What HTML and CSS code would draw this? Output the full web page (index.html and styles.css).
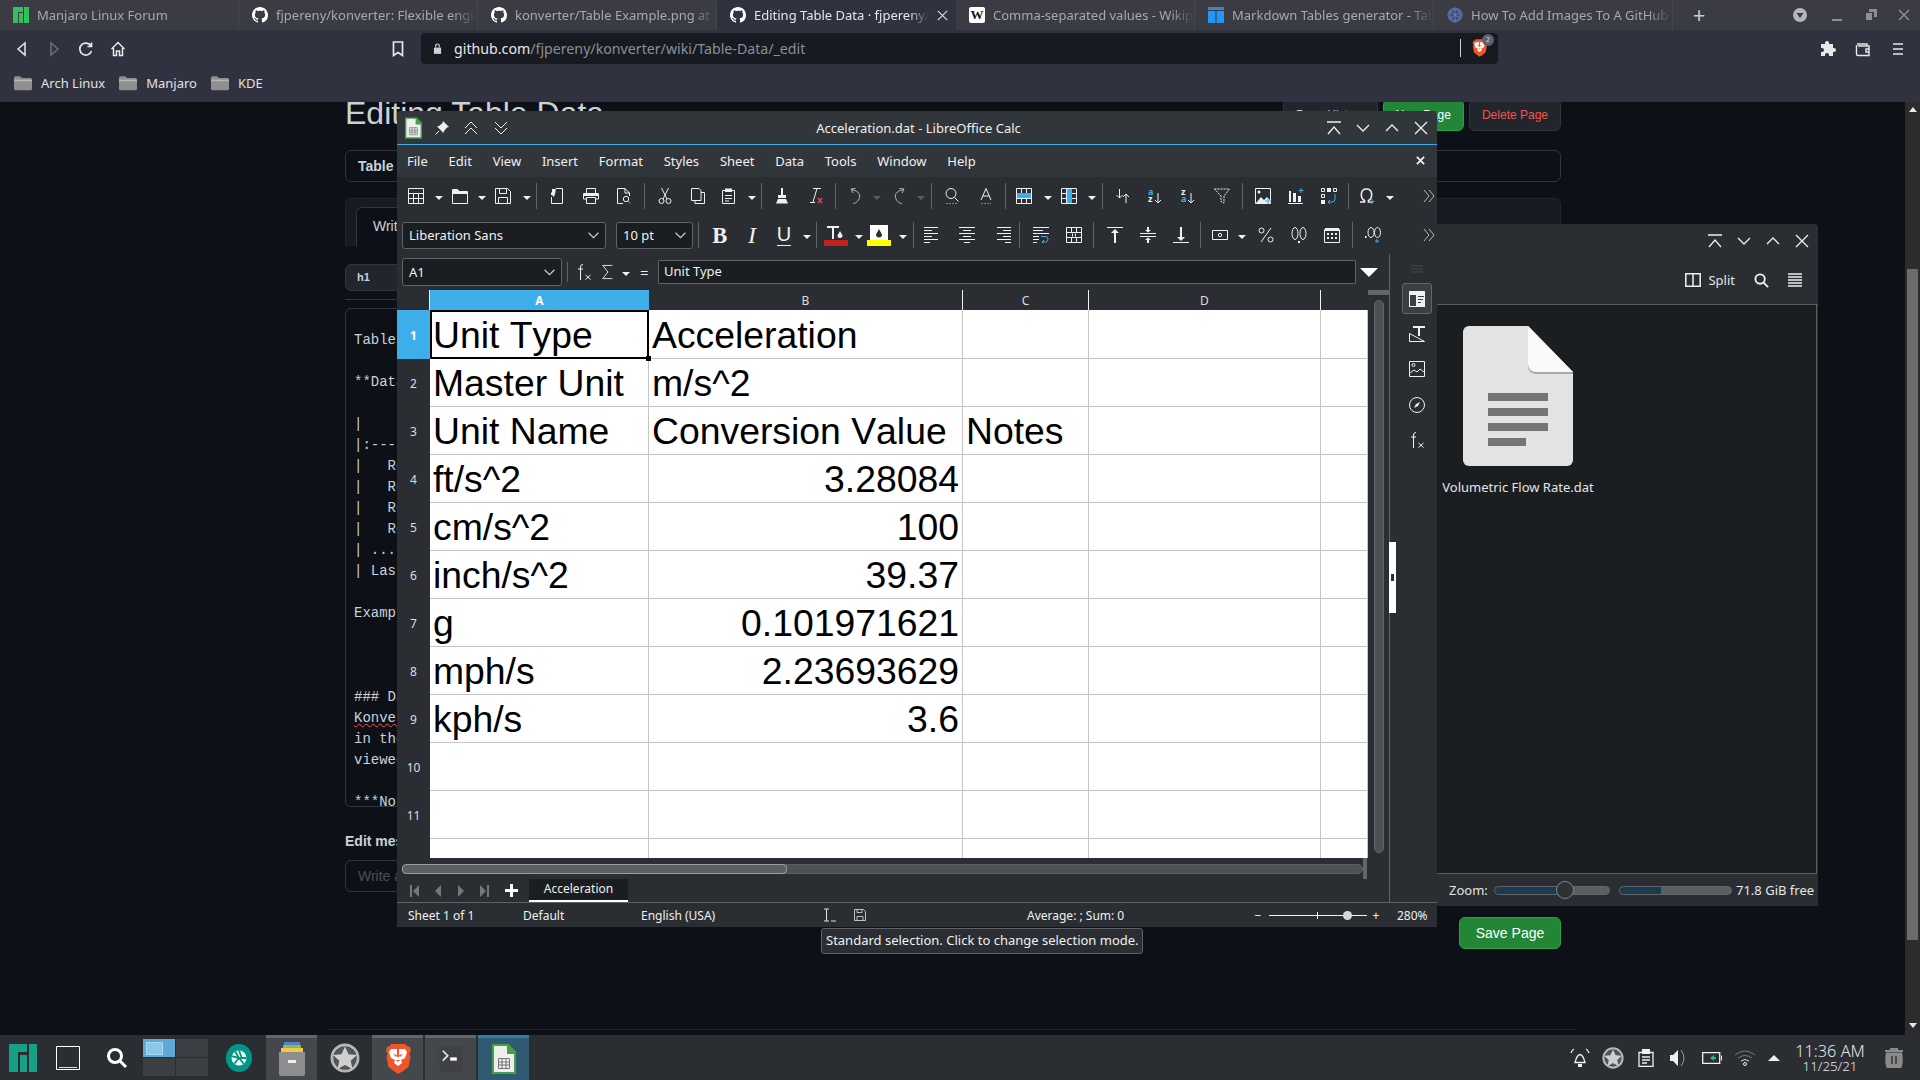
FILE: index.html
```html
<!DOCTYPE html>
<html lang="en">
<head>
<meta charset="utf-8">
<title>Editing Table Data</title>
<link rel="stylesheet" href="styles.css">
</head>
<body>
<svg class="defs" width="0" height="0">
<defs>
<symbol id="gh" viewBox="0 0 16 16"><path fill="currentColor" d="M8 0C3.58 0 0 3.58 0 8c0 3.54 2.29 6.53 5.47 7.59.4.07.55-.17.55-.38 0-.19-.01-.82-.01-1.49-2.01.37-2.53-.49-2.69-.94-.09-.23-.48-.94-.82-1.13-.28-.15-.68-.52-.01-.53.63-.01 1.08.58 1.23.82.72 1.21 1.87.87 2.33.66.07-.52.28-.87.51-1.07-1.78-.2-3.64-.89-3.64-3.95 0-.87.31-1.59.82-2.15-.08-.2-.36-1.02.08-2.12 0 0 .67-.21 2.2.82.64-.18 1.32-.27 2-.27s1.36.09 2 .27c1.53-1.04 2.2-.82 2.2-.82.44 1.1.16 1.92.08 2.12.51.56.82 1.27.82 2.15 0 3.07-1.87 3.75-3.65 3.95.29.25.54.73.54 1.48 0 1.07-.01 1.93-.01 2.2 0 .21.15.46.55.38A8.013 8.013 0 0016 8c0-4.42-3.58-8-8-8z"/></symbol>
<symbol id="folder" viewBox="0 0 16 16"><path fill="#8f8f8f" d="M0 3.5A1.5 1.5 0 011.5 2h4l1.5 1.5h7.5A1.5 1.5 0 0116 5v8a1.5 1.5 0 01-1.5 1.5h-13A1.5 1.5 0 010 13z"/><path fill="#b5b5b5" d="M0 5h16v1.5H0z"/></symbol>
<symbol id="table" viewBox="0 0 16 16"><path fill="none" stroke="currentColor" d="M.5.5h15v15H.5zM.5 5.500h15M.5 10.500h15M5.500 5.500v10M10.500 5.500v10"/></symbol>
<symbol id="open" viewBox="0 0 16 16"><path fill="none" stroke="currentColor" d="M.5 1.500h5l2 2h8v12H.5z"/><path fill="currentColor" d="M1 2h5l2 2h7v2H1z"/></symbol>
<symbol id="save" viewBox="0 0 16 16"><path fill="none" stroke="currentColor" d="M.5.5h12l3 3v12H.5zM4.500.5v5h7v-5M3.500 15.500v-6h9v6"/></symbol>
<symbol id="export" viewBox="0 0 16 16"><path fill="none" stroke="currentColor" d="M2.500 9v6.500h11V.5H7L2.500 5v2"/><path fill="currentColor" d="M3 1h3.500v3L5 9 3 7z"/></symbol>
<symbol id="print" viewBox="0 0 16 16"><path fill="none" stroke="currentColor" d="M3.500 5V.5h9V5M3.500 11H.5V5.500h15V11h-3M3.500 9.500h9v6h-9z"/><path fill="currentColor" d="M1 5h14v3H1z"/></symbol>
<symbol id="preview" viewBox="0 0 16 16"><path fill="none" stroke="currentColor" d="M7 15.500H1.500V.5H9l4.500 4.500v3M9 .5V5h4.500"/><circle cx="10" cy="11" r="2.700" fill="none" stroke="currentColor"/><path stroke="#3daee9" d="M12 13l2.500 2.500"/></symbol>
<symbol id="cut" viewBox="0 0 16 16"><path fill="none" stroke="currentColor" d="M4.500 0L10 11M11.500 0L6 11"/><circle cx="4.500" cy="13" r="2.500" fill="none" stroke="currentColor"/><circle cx="11.500" cy="13" r="2.500" fill="none" stroke="currentColor"/></symbol>
<symbol id="copy" viewBox="0 0 16 16"><path fill="none" stroke="currentColor" d="M1.500.5H9l2 2v10H1.500zM11 4.500h3.500v11H5v-3"/></symbol>
<symbol id="paste" viewBox="0 0 16 16"><path fill="none" stroke="currentColor" d="M4 2.500H1.500v13h12v-13H11M4 7.500h7M4 10.500h7M4 13h4"/><path fill="currentColor" d="M4 .5h7v3.500H4z"/></symbol>
<symbol id="brush" viewBox="0 0 16 16"><path fill="currentColor" d="M7 0h2v7H7zM4 7h8v3H4zM4 11h8l2 4.500H2z"/></symbol>
<symbol id="clear" viewBox="0 0 16 16"><path fill="none" stroke="currentColor" d="M6 .5h8M10 .5L6 14M3 14.500h5"/><path stroke="#da4453" stroke-width="1.500" d="M11 10l4 5M15 10l-4 5"/></symbol>
<symbol id="undo" viewBox="0 0 16 16"><path fill="none" stroke="#b8bbbe" d="M3 1l2 4M3 1l4.500-.500M3.500 1.500C11 3 13 7 11 11s-5 4.500-6 4.500"/></symbol>
<symbol id="redo" viewBox="0 0 16 16"><path fill="none" stroke="#b8bbbe" d="M13 1l-2 4M13 1l-4.500-.500M12.500 1.500C5 3 3 7 5 11s5 4.500 6 4.500"/></symbol>
<symbol id="find" viewBox="0 0 16 16"><circle cx="7" cy="5.500" r="5" fill="none" stroke="currentColor"/><path stroke="currentColor" d="M10.500 9.500l4 4"/><path stroke="#da6b44" stroke-dasharray="2 1" d="M2 15.500h11"/></symbol>
<symbol id="fontA" viewBox="0 0 16 16"><path fill="none" stroke="currentColor" d="M3 12L8 .5 13 12M5 8h6"/><path stroke="#27ae60" stroke-dasharray="2 1" d="M3 15.500h10"/></symbol>
<symbol id="tblblue" viewBox="0 0 16 16"><path fill="none" stroke="currentColor" d="M.5.5h15v15H.5zM5.500.5v15M10.500.5v15M.5 10.500h15"/><path fill="#3daee9" d="M1 5h14v5H1z"/></symbol>
<symbol id="colblue" viewBox="0 0 16 16"><path fill="none" stroke="currentColor" d="M.5.5h15v15H.5zM.5 5.500h15M.5 10.500h15M5.500.5v15"/><path fill="#3daee9" d="M6 1h5v14H6z"/></symbol>
<symbol id="sort" viewBox="0 0 16 16"><path fill="none" stroke="currentColor" d="M4.500 1v9M1.500 7l3 3 3-3M11 15V6M8 9l3-3 3 3"/></symbol>
<symbol id="az" viewBox="0 0 16 16"><text x="0" y="7" class="blue">a</text><text x="0" y="14" class="white">z</text><path fill="none" stroke="currentColor" d="M10 5v10M7 12l3 3 3-3"/></symbol>
<symbol id="za" viewBox="0 0 16 16"><text x="0" y="7" class="white">z</text><text x="0" y="14" class="blue">a</text><path fill="none" stroke="currentColor" d="M10 5v10M7 12l3 3 3-3"/></symbol>
<symbol id="filter" viewBox="0 0 16 16"><path fill="none" stroke="currentColor" stroke-dasharray="2 1" d="M.5 1h15L10 8v7l-3-1.500V8z"/></symbol>
<symbol id="image" viewBox="0 0 16 16"><path fill="none" stroke="currentColor" d="M.5.5h15v15H.5z"/><circle cx="4" cy="4" r="1.500" fill="currentColor"/><path fill="currentColor" d="M1 15l5-6 3 3 3-3 3 3v3z"/><path stroke="#3daee9" d="M13 10v6M10 13h6"/></symbol>
<symbol id="chart" viewBox="0 0 16 16"><path fill="currentColor" d="M1 3h2v11H1zM5 5h3v9H5zM10 8h3v6h-3zM0 15h15v1H0z"/><path stroke="#3daee9" d="M13 0v5M10.500 2.500h5"/></symbol>
<symbol id="pivot" viewBox="0 0 16 16"><path fill="none" stroke="currentColor" d="M.5.5h3v3h-3zM12.500.5h3v3h-3zM.5 6.500h3v3h-3z"/><path fill="currentColor" d="M6 0h4v4H6zM0 12h4v4H0z"/><path fill="none" stroke="#3daee9" d="M14 6v5q0 3-3 3H7M9 12l-2 2 2 2"/></symbol>
<symbol id="omega" viewBox="0 0 16 16"><path fill="none" stroke="currentColor" stroke-width="1.600" d="M1 14h4.500v-1.500C1 10 1 1 7.500 1S14 10 9.500 12.500V14H14"/><path stroke="#3daee9" d="M13 11v5M10.500 13.500h5"/></symbol>
<symbol id="more" viewBox="0 0 16 16"><path fill="none" stroke="#b5b8bb" d="M3 2l5 6-5 6M8 2l5 6-5 6"/></symbol>
<symbol id="bold" viewBox="0 0 16 16"><text x="1" y="15" class="bold">B</text></symbol>
<symbol id="fcolor" viewBox="0 0 20 15"><path fill="currentColor" d="M1 1h12v2H8v11H6V3H1z"/><path fill="currentColor" d="M14 6l2.500 4.500a2.500 2.500 0 11-5 0z"/></symbol>
<symbol id="hlcolor" viewBox="0 0 20 15"><path fill="#fff" d="M1 0h18v15H1z"/><path fill="#2a2e32" d="M10 4l3 5.500a3 3 0 11-6 0z"/></symbol>
<symbol id="left" viewBox="0 0 16 16"><path stroke="currentColor" d="M0 .5h14M0 3.500h8M0 6.500h14M0 9.500h8M0 12.500h14M0 15.500h6"/></symbol>
<symbol id="center" viewBox="0 0 16 16"><path stroke="currentColor" d="M0 .5h16M4 3.500h8M0 6.500h16M4 9.500h8M0 12.500h16M5 15.500h6"/></symbol>
<symbol id="right" viewBox="0 0 16 16"><path stroke="currentColor" d="M2 .5h14M8 3.500h8M2 6.500h14M8 9.500h8M2 12.500h14M10 15.500h6"/></symbol>
<symbol id="wrap" viewBox="0 0 16 16"><path stroke="currentColor" d="M0 .5h16M0 3.500h10M0 6.500h16M0 9.500h6M0 12.500h6M0 15.500h4"/><path fill="none" stroke="#3daee9" d="M8 9.500h5q2 0 2 2.500t-2 3H9M11 13l-2 2 2 1"/></symbol>
<symbol id="merge" viewBox="0 0 16 16"><path fill="none" stroke="currentColor" d="M.5.5h15v15H.5zM.5 5.500h15M.5 10.500h15M5.500.5v5M10.500.5v5M5.500 10.500v5M10.500 10.500v5"/><path stroke="currentColor" d="M6.500 6.500v3M9.500 6.500v3"/></symbol>
<symbol id="atop" viewBox="0 0 16 16"><path stroke="currentColor" d="M0 .5h16"/><path fill="currentColor" d="M7 6h2v10H7zM4 6l4-4 4 4z"/></symbol>
<symbol id="amid" viewBox="0 0 16 16"><path stroke="currentColor" d="M0 6.500h16M0 9.500h16"/><path fill="currentColor" d="M7 0h2v3H7zM5 3h6L8 5.500zM7 13h2v3H7zM5 13h6l-3-2.500z"/></symbol>
<symbol id="abot" viewBox="0 0 16 16"><path stroke="currentColor" d="M0 15.500h16"/><path fill="currentColor" d="M7 0h2v10H7zM4 10l4 4 4-4z"/></symbol>
<symbol id="currency" viewBox="0 0 16 16"><path fill="none" stroke="currentColor" d="M.5 3.500h15v9H.5z"/><circle cx="8" cy="8" r="1.700" fill="none" stroke="currentColor"/></symbol>
<symbol id="percent" viewBox="0 0 16 16"><path stroke="currentColor" d="M13 1L3 15"/><circle cx="3.500" cy="3.500" r="2.500" fill="none" stroke="currentColor"/><circle cx="12.500" cy="12.500" r="2.500" fill="none" stroke="currentColor"/></symbol>
<symbol id="number" viewBox="0 0 16 16"><ellipse cx="4" cy="6.500" rx="3" ry="6" fill="none" stroke="currentColor"/><ellipse cx="12" cy="6.500" rx="3" ry="6" fill="none" stroke="currentColor"/><path fill="currentColor" d="M7 14h2v2H7z"/></symbol>
<symbol id="date" viewBox="0 0 16 16"><path fill="none" stroke="currentColor" d="M.5 2.500h15v13H.5z"/><path fill="currentColor" d="M1 1h14v3H1zM3 6h2v2H3zM7 6h2v2H7zM11 6h2v2h-2zM3 10h2v2H3zM7 10h2v2H7zM11 10h2v2h-2z"/></symbol>
<symbol id="decimal" viewBox="0 0 16 16"><path fill="currentColor" d="M0 9h1.500v2H0z"/><ellipse cx="6" cy="5.500" rx="3" ry="5" fill="none" stroke="currentColor"/><ellipse cx="12.500" cy="5.500" rx="3" ry="5" fill="none" stroke="currentColor"/><path stroke="#3daee9" d="M12 12v4M10 14h4"/></symbol>
<symbol id="sideprop" viewBox="0 0 16 16"><path fill="currentColor" d="M0 0h16v16H0z"/><path fill="#3a3f44" d="M1 4h6v11H1zM9 5h6v1H9zM9 8h5v1H9zM9 11h3v1H9z"/></symbol>
<symbol id="sidestyle" viewBox="0 0 16 16"><path fill="currentColor" d="M4 0h12v2h-5v8H9V2H4z"/><path fill="none" stroke="currentColor" d="M.5 7.500v8h15z"/></symbol>
<symbol id="sidegal" viewBox="0 0 16 16"><path fill="none" stroke="currentColor" d="M.5.5h15v15H.5zM1 12l4-3 3 2 3-3 4 3"/><circle cx="4.500" cy="4" r="1.500" fill="none" stroke="currentColor"/></symbol>
<symbol id="sidenav" viewBox="0 0 16 16"><circle cx="8" cy="8" r="7.500" fill="none" stroke="currentColor"/><path fill="currentColor" d="M11 5L9 9 5 11l2-4z"/></symbol>
<symbol id="fx" viewBox="0 0 16 16"><path fill="none" stroke="currentColor" d="M7 .5Q4.500.5 4.500 3v13M2 5h5M9.500 11l5 4.500M14.500 11l-5 4.500"/></symbol>
<symbol id="sigma" viewBox="0 0 16 16"><path fill="none" stroke="currentColor" d="M13 .5H2L8 8l-6 7.500h11"/></symbol>
<symbol id="close" viewBox="0 0 14 14"><path fill="none" stroke="currentColor" stroke-width="1.300" d="M1 1l12 12M13 1L1 13"/></symbol>
<symbol id="up" viewBox="0 0 14 14"><path fill="none" stroke="currentColor" stroke-width="1.300" d="M1 10l6-6 6 6"/></symbol>
<symbol id="down" viewBox="0 0 14 14"><path fill="none" stroke="currentColor" stroke-width="1.300" d="M1 4l6 6 6-6"/></symbol>
<symbol id="keep" viewBox="0 0 14 14"><path fill="none" stroke="currentColor" stroke-width="1.300" d="M0 1h14M1 13l6-7 6 7"/></symbol>
<symbol id="star" viewBox="0 0 30 30"><circle cx="15" cy="15" r="13" fill="none" stroke="#b5b5b5" stroke-width="3"/><circle cx="15" cy="15" r="11" fill="#55585b"/><path fill="#cfcfcf" d="M15 3.500l3.500 7.700 8.500.9-6.300 5.700 1.800 8.300L15 21.900l-7.500 4.200 1.800-8.300L3 12.100l8.500-.9z"/></symbol>
<symbol id="brave" viewBox="0 0 26 30"><path fill="#f1562b" d="M6 0h14l2 2 3 1 1 3-1.500 4 1 3-2 10-6 4.500L13 30l-3.500-2.500L3.500 23l-2-10 1-3L1 6l1-3 3-1z"/><path fill="#fff" d="M6 5h14l2 3-2 6-4 2 1 3-4 3-4-3 1-3-4-2-2-6z"/><path fill="#f1562b" d="M8 10l4 1-1 2zM18 10l-4 1 1 2zM11 16h4l-2 2zM12 5h2v8h-2z"/></symbol>
<symbol id="calc" viewBox="0 0 24 30"><path fill="#eeeeee" stroke="#43a047" stroke-width="2" d="M1 1h15l7 7v21H1z"/><path fill="#43a047" d="M15 1h2l6 7v2h-8z"/><path fill="none" stroke="#777" d="M6.500 14.500h11v10h-11zM6.500 18h11M6.500 21h11M10 14.500v10M14 14.500v10"/></symbol>
</defs>
</svg>

<div class="screen">
  <div class="browser">
    <div class="tabs">
      <div class="tab"><svg class="ticon" viewBox="0 0 16 16"><path fill="#35bf5c" d="M0 0h10v5H5v11H0zM6 6h4v10H6zM11 0h5v16h-5z"/></svg><span class="ttext">Manjaro Linux Forum</span></div>
      <div class="tab"><svg class="ticon"><use href="#gh"/></svg><span class="ttext">fjpereny/konverter: Flexible engine for unit conversion</span></div>
      <div class="tab"><svg class="ticon"><use href="#gh"/></svg><span class="ttext">konverter/Table Example.png at master</span></div>
      <div class="tab active"><svg class="ticon"><use href="#gh"/></svg><span class="ttext">Editing Table Data · fjpereny/konverter</span><svg class="tclose"><use href="#close"/></svg></div>
      <div class="tab"><span class="wiki">W</span><span class="ttext">Comma-separated values - Wikipedia</span></div>
      <div class="tab"><svg class="ticon" viewBox="0 0 16 16"><path fill="#3a86c8" d="M0 0h16v3H0z"/><path fill="#2196f3" d="M0 4h7.500v12H0zM8.500 4H16v12H8.500z"/></svg><span class="ttext">Markdown Tables generator - TablesGenerator</span></div>
      <div class="tab"><svg class="ticon" viewBox="0 0 16 16"><circle cx="8" cy="8" r="7" fill="#3a4a78" stroke="#6a7cb4"/><path fill="none" stroke="#6a7cb4" d="M8 2l5 3v6l-5 3-5-3V5zM3 5l10 6M13 5L3 11M8 2v12"/></svg><span class="ttext">How To Add Images To A GitHub Wiki</span></div>
      <div class="newtab">+</div>
      <div class="winctl">
        <svg class="dropc" viewBox="0 0 14 14"><circle cx="7" cy="7" r="7" fill="#b3b5b8"/><path fill="#3b3c44" d="M3.500 5h7L7 10z"/></svg>
        <svg class="wc wmin" viewBox="0 0 12 12"><path stroke="#8d8f94" stroke-width="2" d="M1 11h10"/></svg>
        <svg class="wc wmax" viewBox="0 0 12 12"><path fill="#8d8f94" d="M4 0h8v8H9V3H4zM1 4h6v7H1z"/></svg>
        <svg class="wc wx" viewBox="0 0 14 14"><path fill="none" stroke="#8d8f94" stroke-width="1.500" d="M2 2l10 10M12 2L2 12"/></svg>
      </div>
    </div>
    <div class="navbar">
      <svg class="nav" viewBox="0 0 16 16"><path fill="none" stroke="#e8e8e8" stroke-width="1.500" d="M11 2L4 8l7 6z"/></svg>
      <svg class="nav" viewBox="0 0 16 16"><path fill="none" stroke="#6c6f78" stroke-width="1.500" d="M5 2l7 6-7 6z"/></svg>
      <svg class="nav" viewBox="0 0 16 16"><path fill="none" stroke="#e8e8e8" stroke-width="1.700" d="M13 5a6 6 0 10.500 5M13.500 1.500V5.500H9.500"/></svg>
      <svg class="nav" viewBox="0 0 16 16"><path fill="none" stroke="#e8e8e8" stroke-width="1.500" d="M1.500 8L8 1.500 14.500 8M3.500 7v7.500h3V10h3v4.500h3V7"/></svg>
      <svg class="bm" viewBox="0 0 12 16"><path fill="none" stroke="#e8e8e8" stroke-width="1.700" d="M1.500 1h9v13.500L6 11.500l-4.500 3z"/></svg>
      <div class="urlbar">
        <svg class="lock" viewBox="0 0 10 12"><path fill="#d0d0d0" d="M1 5h8v7H1z"/><path fill="none" stroke="#d0d0d0" stroke-width="1.300" d="M3 5V3a2 2 0 014 0v2"/></svg>
        <span class="url"><b>github.com</b>/fjpereny/konverter/wiki/Table-Data/_edit</span>
        <span class="urlsep"></span>
        <span class="shield"><svg class="shieldi"><use href="#brave"/></svg><span class="badge">2</span></span>
      </div>
      <svg class="ext" viewBox="0 0 16 16"><path fill="#e8e8e8" d="M5 2a2 2 0 014 0v1h4v4h1a2 2 0 010 4h-1v4H9v-1a2 2 0 00-4 0v1H1v-4h1a2 2 0 000-4H1V3h4z"/></svg>
      <svg class="wallet" viewBox="0 0 16 16"><path fill="none" stroke="#e8e8e8" stroke-width="1.400" d="M2 3h10v2M1.500 4v9a1.500 1.500 0 001.500 1.500h11V5H3M14 8h-3v3h3"/></svg>
      <svg class="ham" viewBox="0 0 14 14"><path stroke="#e8e8e8" stroke-width="1.500" d="M2 2h10M2 7h10M2 12h10"/></svg>
    </div>
    <div class="bookmarks">
      <div class="bk"><svg class="bkf"><use href="#folder"/></svg>Arch Linux</div>
      <div class="bk"><svg class="bkf"><use href="#folder"/></svg>Manjaro</div>
      <div class="bk"><svg class="bkf"><use href="#folder"/></svg>KDE</div>
    </div>
    <div class="page">
      <div class="content">
        <div class="page-head">
          <h1 class="ptitle">Editing Table Data</h1>
          <div class="pbtns"><span class="pbtn">Page History</span><span class="pbtn green">New Page</span><span class="pbtn red">Delete Page</span></div>
        </div>
        <div class="titlebox">Table Data</div>
        <div class="form">
          <div class="formtabs"><span class="write">Write</span></div>
          <div class="mdbar"><span class="mdb">h1</span></div>
          <pre class="editor">Table Data

**Data Table Format**

|          Unit Name         |  Conversion Value  |
|:---------------------------|-------------------:|
|   Row 1                    |  Value             |
|   Row 2                    |  Value             |
|   Row 3                    |  Value             |
|   Row 4                    |  Value             |
| ...                        |  ...               |
| Last Row                   |  Value             |

Example:



### Data File
<span class="spell">Konverter</span> stores data files
in the data directory and can be
viewed in any spreadsheet.

***Note***</pre>
          <div class="editlabel">Edit message</div>
          <div class="editinput">Write a small message here explaining this change. (Optional)</div>
          <div class="savewrap"><span class="savebtn">Save Page</span></div>
          <div class="pagefoot"></div>
        </div>
      </div>
      <div class="pscroll">
        <span class="parrow up"></span>
        <span class="pthumb"></span>
        <span class="parrow dn"></span>
      </div>
    </div>
  </div>

  <div class="taskbar">
    <div class="ti w46"><svg class="i28" viewBox="0 0 28 28"><path fill="#16a085" d="M1 0h17v8H9v20H1a1 1 0 01-1-1V1a1 1 0 011-1zM11 11h7v17h-7zM20 0h7a1 1 0 011 1v26a1 1 0 01-1 1h-7z"/></svg></div>
    <div class="ti w44"><svg class="i24" viewBox="0 0 24 24"><path fill="none" stroke="#fff" d="M.5.5h23v23H.5z"/><path stroke="#ddd" d="M3 21.500h18"/></svg></div>
    <div class="ti w52"><svg class="i22" viewBox="0 0 22 22"><circle cx="9" cy="9" r="6.500" fill="none" stroke="#fff" stroke-width="3"/><path stroke="#fff" stroke-width="3" d="M14 14l6 6"/></svg></div>
    <div class="pager">
      <div class="pg on"><span class="pgw"></span></div><div class="pg"></div><div class="pg"></div><div class="pg"></div>
    </div>
    <div class="ti w58"><svg class="i28" viewBox="0 0 28 30"><ellipse cx="14" cy="15" rx="14" ry="15" fill="#009688"/><circle cx="14" cy="15" r="8" fill="#fff"/><path fill="none" stroke="#009688" stroke-width="2" d="M14 7l3 8M22 15h-8M19 21l-5-6M9 21l5-6M6 13l8 2M10 8l4 7"/></svg></div>
    <div class="ti task first"><svg class="i28h" viewBox="0 0 28 34"><path fill="#5b7fc7" d="M6 0h16v3H6z"/><path fill="#7fbf5a" d="M5 3h18v3H5z"/><path fill="#f0c94a" d="M3 6h22v4H3z"/><path fill="#8e8e8e" d="M1 10h26v22a2 2 0 01-2 2H3a2 2 0 01-2-2z"/><path fill="#ececec" d="M10 18h8v3h-8z"/></svg></div>
    <div class="ti w55"><svg class="i30"><use href="#star"/></svg></div>
    <div class="ti task"><svg class="i26"><use href="#brave"/></svg></div>
    <div class="ti task"><svg class="i28" viewBox="0 0 28 34"><rect y="1" width="28" height="32" rx="2" fill="#3f4144"/><path fill="none" stroke="#e8e8e8" stroke-width="2" d="M4 7l6 6-6 6"/><path fill="#fff" d="M13 15h8v4h-8z"/></svg></div>
    <div class="ti task act"><svg class="i24h"><use href="#calc"/></svg></div>
    <div class="tray">
      <div class="tr"><svg class="i20" viewBox="0 0 20 20"><path fill="none" stroke="#f0f0f0" stroke-width="1.300" d="M5 14.500c1-2 1-7 5-8 4 1 4 6 5 8zM1 5Q2 2 4 1M19 5q-1-3-3-4"/><path fill="#f0f0f0" d="M8 16h4v3H8z"/></svg></div>
      <div class="tr"><svg class="i22s"><use href="#star"/></svg></div>
      <div class="tr"><svg class="i18" viewBox="0 0 16 18"><path fill="none" stroke="#f0f0f0" stroke-width="1.300" d="M1 3.500h14v14H1zM4 8h8M4 11h8M4 14h5"/><path fill="#f0f0f0" d="M4 0h8v5H4z"/></svg></div>
      <div class="tr"><svg class="i18" viewBox="0 0 18 18"><path fill="#f0f0f0" d="M0 6h3l5-5v16l-5-5H0z"/><path fill="none" stroke="#999" d="M11 1q6 8 0 16"/></svg></div>
      <div class="tr"><svg class="i20b" viewBox="0 0 20 12"><path fill="none" stroke="#f0f0f0" stroke-width="1.300" d="M.7.7h17v10.600H.7z"/><path fill="#f0f0f0" d="M19 3.500h1v5h-1z"/><path fill="#1abc9c" d="M8 6l4-3v2h2v2h-2v2z"/></svg></div>
      <div class="tr"><svg class="i22w" viewBox="0 0 22 16"><path fill="none" stroke="#777" d="M1 5q10-8 20 0M4 8q7-5 14 0"/><path fill="none" stroke="#ddd" d="M7 11q4-3 8 0"/><circle cx="11" cy="14" r="1.500" fill="none" stroke="#eee"/></svg></div>
      <div class="trup"><span class="uparrow"></span></div>
      <div class="clock"><span class="time">11:36 AM</span><span class="cdate">11/25/21</span></div>
      <div class="trash"><svg class="i20h" viewBox="0 0 18 20"><path fill="#8a8a8a" d="M0 2h18v2H0zM5 0h8v2H5zM1 4.500h16c1 4 1 9 0 14a2 2 0 01-1.500 1.500h-13A2 2 0 011 18.500c-1-5-1-10 0-14z"/><path fill="#4a4a4a" d="M6 8h2v8H6zM10 8h2v8h-2z"/></svg></div>
    </div>
  </div>

  <section class="dolphin">
    <div class="dol-title">
      <svg class="winb"><use href="#keep"/></svg><svg class="winb"><use href="#down"/></svg><svg class="winb"><use href="#up"/></svg><svg class="winb"><use href="#close"/></svg>
    </div>
    <div class="dol-bar">
      <svg class="spliti" viewBox="0 0 16 14"><path fill="none" stroke="#f0f0f0" stroke-width="1.500" d="M.8.8h14.400v12.400H.8zM8 .8v12.400"/></svg><span class="splitl">Split</span>
      <svg class="dsearch" viewBox="0 0 16 16"><circle cx="6.500" cy="6.500" r="5" fill="none" stroke="#f0f0f0" stroke-width="2"/><path stroke="#f0f0f0" stroke-width="2" d="M10 10l5 5"/></svg>
      <svg class="dmenu" viewBox="0 0 14 14"><path stroke="#f0f0f0" stroke-width="1.500" d="M0 1h14M0 4h14M0 7h14M0 10h14M0 13h14"/></svg>
    </div>
    <div class="dol-main">
      <div class="file">
        <svg class="fileicon" viewBox="0 0 110 140">
          <path fill="#e3e3e3" d="M6 0h59l45 46v88a6 6 0 01-6 6H6a6 6 0 01-6-6V6a6 6 0 016-6z"/>
          <path fill="#a8a8a8" d="M65 0v40a8 8 0 008 8h37v-2z"/>
          <path fill="#fafafa" d="M65 0v38a8 8 0 008 8h37z"/>
          <path fill="#757575" d="M25 67h60v8H25zM25 82h60v8H25zM25 97h60v8H25zM25 112h38v8H25z"/>
        </svg>
        <span class="fname">Volumetric Flow Rate.dat</span>
      </div>
    </div>
    <div class="dol-status">
      <span class="zl">Zoom:</span>
      <span class="zslider"><span class="zfill"></span><span class="zknob"></span></span>
      <span class="zcap"><span class="zcapf"></span></span>
      <span class="zfree">71.8 GiB free</span>
    </div>
  </section>

  <section class="calc">
    <div class="c-title">
      <svg class="c-app"><use href="#calc"/></svg>
      <svg class="c-pin" viewBox="0 0 14 14"><path fill="#f0f0f0" d="M8 0l6 6-2 .5-3 3.500L8.500 12 2 5.500 4 5l3.500-3z"/><path stroke="#f0f0f0" d="M4 10l-3.500 3.500"/></svg>
      <svg class="c-dbl" viewBox="0 0 14 14"><path fill="none" stroke="#f0f0f0" d="M1 7l6-6 6 6M1 13l6-6 6 6"/></svg>
      <svg class="c-dbl" viewBox="0 0 14 14"><path fill="none" stroke="#f0f0f0" d="M1 1l6 6 6-6M1 7l6 6 6-6"/></svg>
      <span class="c-name">Acceleration.dat - LibreOffice Calc</span>
      <svg class="winb"><use href="#keep"/></svg><svg class="winb"><use href="#down"/></svg><svg class="winb"><use href="#up"/></svg><svg class="winb"><use href="#close"/></svg>
    </div>
    <div class="c-menu">
      <span>File</span><span>Edit</span><span>View</span><span>Insert</span><span>Format</span><span>Styles</span><span>Sheet</span><span>Data</span><span>Tools</span><span>Window</span><span>Help</span>
      <svg class="m-close" viewBox="0 0 10 10"><path stroke="#f0f0f0" stroke-width="2" d="M1 1l8 8M9 1L1 9"/></svg>
    </div>
    <div class="t1 lines">
      <i><svg><use href="#table"/></svg></i><i><b class="dd"></b></i><i><svg><use href="#open"/></svg></i><i><b class="dd"></b></i><i><svg><use href="#save"/></svg></i><i><b class="dd"></b></i><i><b class="sep"></b></i>
      <i><svg><use href="#export"/></svg></i><i><svg><use href="#print"/></svg></i><i><svg><use href="#preview"/></svg></i><i><b class="sep"></b></i>
      <i><svg><use href="#cut"/></svg></i><i><svg><use href="#copy"/></svg></i><i><svg><use href="#paste"/></svg></i><i><b class="dd"></b></i><i><b class="sep"></b></i>
      <i><svg><use href="#brush"/></svg></i><i><svg><use href="#clear"/></svg></i><i><b class="sep"></b></i>
      <i><svg><use href="#undo"/></svg></i><i><b class="dd dim"></b></i><i><svg><use href="#redo"/></svg></i><i><b class="dd dim"></b></i><i><b class="sep"></b></i>
      <i><svg><use href="#find"/></svg></i><i><svg><use href="#fontA"/></svg></i><i><b class="sep"></b></i>
      <i><svg><use href="#tblblue"/></svg></i><i><b class="dd"></b></i><i><svg><use href="#colblue"/></svg></i><i><b class="dd"></b></i><i><b class="sep"></b></i>
      <i><svg><use href="#sort"/></svg></i><i><svg><use href="#az"/></svg></i><i><svg><use href="#za"/></svg></i><i><svg><use href="#filter"/></svg></i><i><b class="sep"></b></i>
      <i><svg><use href="#image"/></svg></i><i><svg><use href="#chart"/></svg></i><i><svg><use href="#pivot"/></svg></i><i><b class="sep"></b></i>
      <i><svg><use href="#omega"/></svg></i><i><b class="dd"></b></i><i><svg><use href="#more"/></svg></i>
    </div>
    <div class="t2">
      <div class="combo fontc"><span>Liberation Sans</span><svg class="chev" viewBox="0 0 10 6"><path fill="none" stroke="#d0d0d0" d="M.5.5L5 5 9.500.5"/></svg></div>
      <div class="combo sizec"><span>10 pt</span><svg class="chev" viewBox="0 0 10 6"><path fill="none" stroke="#d0d0d0" d="M.5.5L5 5 9.500.5"/></svg></div>
      <div class="t2grid lines">
        <i><b class="sep"></b></i>
        <i><svg class="bsvg"><use href="#bold"/></svg></i>
        <i><span class="ital">I</span></i>
        <i><span class="under">U</span></i>
        <i><b class="dd"></b></i><i><b class="sep"></b></i>
        <i class="ccol"><svg class="cico"><use href="#fcolor"/></svg><span class="bar barred"></span></i><i><b class="dd"></b></i>
        <i class="ccol"><svg class="cico"><use href="#hlcolor"/></svg><span class="bar baryel"></span></i><i><b class="dd"></b></i><i><b class="sep"></b></i>
        <i><svg><use href="#left"/></svg></i><i><svg><use href="#center"/></svg></i><i><svg><use href="#right"/></svg></i><i><b class="sep"></b></i>
        <i><svg><use href="#wrap"/></svg></i><i><svg><use href="#merge"/></svg></i><i><b class="sep"></b></i>
        <i><svg><use href="#atop"/></svg></i><i><svg><use href="#amid"/></svg></i><i><svg><use href="#abot"/></svg></i><i><b class="sep"></b></i>
        <i><svg><use href="#currency"/></svg></i><i><b class="dd"></b></i><i><svg><use href="#percent"/></svg></i><i><svg><use href="#number"/></svg></i><i><svg><use href="#date"/></svg></i><i><b class="sep"></b></i>
        <i><svg><use href="#decimal"/></svg></i><i><svg><use href="#more"/></svg></i>
      </div>
    </div>
    <div class="c-body">
      <div class="c-left">
        <div class="fbar">
          <div class="combo namec"><span>A1</span><svg class="chev" viewBox="0 0 10 6"><path fill="none" stroke="#d0d0d0" d="M.5.5L5 5 9.500.5"/></svg></div>
          <b class="sep fsep"></b>
          <svg class="fxi"><use href="#fx"/></svg>
          <svg class="sig"><use href="#sigma"/></svg>
          <b class="dd fdd"></b>
          <span class="eq">=</span>
          <div class="finput">Unit Type</div>
          <b class="bigdd"></b>
        </div>
        <div class="sheet">
          <div class="sheetmain">
            <div class="row colhead"><div class="corner"></div><div class="ch on">A</div><div class="ch">B</div><div class="ch">C</div><div class="ch">D</div><div class="ch last"></div></div>
            <div class="grid">
              <div class="row"><div class="rh on">1</div><div class="c a1">Unit Type<span class="handle"></span></div><div class="c">Acceleration</div><div class="c"></div><div class="c"></div><div class="c"></div></div>
              <div class="row"><div class="rh">2</div><div class="c">Master Unit</div><div class="c">m/s^2</div><div class="c"></div><div class="c"></div><div class="c"></div></div>
              <div class="row"><div class="rh">3</div><div class="c">Unit Name</div><div class="c">Conversion Value</div><div class="c">Notes</div><div class="c"></div><div class="c"></div></div>
              <div class="row"><div class="rh">4</div><div class="c">ft/s^2</div><div class="c n">3.28084</div><div class="c"></div><div class="c"></div><div class="c"></div></div>
              <div class="row"><div class="rh">5</div><div class="c">cm/s^2</div><div class="c n">100</div><div class="c"></div><div class="c"></div><div class="c"></div></div>
              <div class="row"><div class="rh">6</div><div class="c">inch/s^2</div><div class="c n">39.37</div><div class="c"></div><div class="c"></div><div class="c"></div></div>
              <div class="row"><div class="rh">7</div><div class="c">g</div><div class="c n">0.101971621</div><div class="c"></div><div class="c"></div><div class="c"></div></div>
              <div class="row"><div class="rh">8</div><div class="c">mph/s</div><div class="c n">2.23693629</div><div class="c"></div><div class="c"></div><div class="c"></div></div>
              <div class="row"><div class="rh">9</div><div class="c">kph/s</div><div class="c n">3.6</div><div class="c"></div><div class="c"></div><div class="c"></div></div>
              <div class="row"><div class="rh">10</div><div class="c"></div><div class="c"></div><div class="c"></div><div class="c"></div><div class="c"></div></div>
              <div class="row"><div class="rh">11</div><div class="c"></div><div class="c"></div><div class="c"></div><div class="c"></div><div class="c"></div></div>
              <div class="row"><div class="rh"></div><div class="c"></div><div class="c"></div><div class="c"></div><div class="c"></div><div class="c"></div></div>
            </div>
          </div>
          <div class="vscroll"><span class="vgrip"></span><span class="vthumb"></span></div>
        </div>
        <div class="hscroll"><span class="htrack"><span class="hthumb"></span></span><span class="hgrip"></span></div>
        <div class="sheettabs">
          <svg class="sn" viewBox="0 0 10 14"><path fill="#777" d="M0 1h2v12H0zM9 1v12L3 7z"/></svg>
          <svg class="sn" viewBox="0 0 10 14"><path fill="#777" d="M8 1v12L2 7z"/></svg>
          <svg class="sn" viewBox="0 0 10 14"><path fill="#777" d="M2 1v12l6-6z"/></svg>
          <svg class="sn" viewBox="0 0 10 14"><path fill="#777" d="M8 1h2v12H8zM1 1v12l6-6z"/></svg>
          <span class="addsheet"></span>
          <span class="stab">Acceleration</span>
        </div>
      </div>
      <div class="sidebar">
        <svg class="sgrip" viewBox="0 0 16 8"><path stroke="#44484c" d="M2 1h12M2 4h12M2 7h12"/></svg>
        <span class="sbtn active"><svg><use href="#sideprop"/></svg></span>
        <span class="sbtn"><svg><use href="#sidestyle"/></svg></span>
        <span class="sbtn"><svg><use href="#sidegal"/></svg></span>
        <span class="sbtn"><svg><use href="#sidenav"/></svg></span>
        <span class="sbtn"><svg><use href="#fx"/></svg></span>
        <span class="collapse"></span>
      </div>
    </div>
    <div class="c-status">
      <span class="st1">Sheet 1 of 1</span>
      <span class="st2">Default</span>
      <span class="st3">English (USA)</span>
      <svg class="st4" viewBox="0 0 14 14"><path fill="none" stroke="#e0e0e0" d="M2 1h5M2 13h5M4.500 1v12M9 13h5"/></svg>
      <svg class="st5" viewBox="0 0 12 12"><path fill="none" stroke="#c0c0c0" d="M.5.5h9l2 2v9H.5zM3 .5v3h5v-3M3 11.500v-4h6v4"/></svg>
      <span class="st6">Average: ; Sum: 0</span>
      <span class="zm">−</span>
      <span class="zbar"><span class="ztick"></span><span class="zdot"></span></span>
      <span class="zm">+</span>
      <span class="zpct">280%</span>
    </div>
    <div class="tooltip">Standard selection. Click to change selection mode.</div>
  </section>
</div>
</body>
</html>
```

FILE: styles.css
```css
* { box-sizing: border-box; }
html, body { margin: 0; padding: 0; }
body { width: 1920px; height: 1080px; overflow: hidden; font-family: "Noto Sans", sans-serif; background: #0d1117; }
.defs { position: absolute; }
.blue { fill: #3daee9; font: bold 9px "Noto Sans", sans-serif; }
.white { fill: #eff0f1; font: bold 9px "Noto Sans", sans-serif; }
.bold { fill: #eff0f1; font: bold 20px "Liberation Serif", serif; }

.screen { position: relative; width: 1920px; height: 1080px; display: flex; flex-direction: column; overflow: hidden; }
.browser { flex: 1; min-height: 0; display: flex; flex-direction: column; }

/* tabs */
.tabs { height: 30px; flex: none; display: flex; background: #3a3b43; color: #a8a9ad; font-size: 13px; }
.tab { width: 239px; padding-left: 13px; display: flex; align-items: center; gap: 8px; border-right: 1px solid #44454d; flex: none; overflow: hidden; }
.tab.active { background: #30333f; color: #e4e5e8; border-right: 0; padding-right: 8px; }
.ticon { width: 16px; height: 16px; flex: none; color: #fff; }
.ttext { flex: 1; white-space: nowrap; overflow: hidden; -webkit-mask-image: linear-gradient(90deg, #000 88%, transparent); mask-image: linear-gradient(90deg, #000 88%, transparent); }
.tclose { width: 11px; height: 11px; color: #e4e5e8; flex: none; }
.wiki { width: 16px; height: 16px; flex: none; background: #fff; color: #111; border-radius: 2px; font: bold 13px/16px "Liberation Serif", serif; text-align: center; }
.newtab { width: 48px; padding-left: 4px; text-align: center; color: #c9cacd; font-size: 22px; line-height: 28px; }
.winctl { flex: 1; display: flex; align-items: center; }
.dropc { width: 14px; height: 14px; margin-left: 72px; }
.wc { width: 12px; height: 12px; }
.wmin { margin-left: 24px; }
.wmax { margin-left: 22px; }
.wx { margin-left: 20px; width: 14px; height: 14px; }

/* nav */
.navbar { height: 36px; flex: none; background: #30333f; display: flex; align-items: center; padding: 1px 0 0 14px; }
.nav { width: 16px; height: 16px; margin-right: 16px; }
.bm { width: 12px; height: 16px; margin-left: 250px; }
.urlbar { width: 1077px; height: 31px; margin: -1px 0 0 17px; background: #181a21; border-radius: 4px; display: flex; align-items: center; padding-left: 12px; color: #8a8f98; font-size: 14.200px; }
.lock { width: 9px; height: 11px; margin-right: 12px; }
.url { flex: 1; white-space: nowrap; }
.url b { font-weight: 400; color: #e6e7ea; }
.urlsep { width: 1px; height: 18px; background: #d0d0d0; }
.shield { position: relative; width: 15px; height: 20px; margin: 0 11px 0 11px; }
.shieldi { display: block; width: 15px; height: 20px; }
.badge { position: absolute; left: 10px; top: -4px; width: 12px; height: 12px; border-radius: 6px; background: #5f6168; color: #ddd; font-size: 7px; line-height: 12px; text-align: center; }
.ext { width: 16px; height: 16px; margin-left: 322px; }
.wallet { width: 16px; height: 16px; margin-left: 19px; }
.ham { width: 14px; height: 14px; margin-left: 20px; }

.bookmarks { height: 36px; flex: none; background: #30333f; display: flex; align-items: center; padding: 0 0 2px 14px; color: #e0e1e4; font-size: 13px; }
.bk { display: flex; align-items: center; gap: 9px; margin-right: 14px; }
.bkf { width: 18px; height: 18px; }

/* github page */
.page { flex: 1; min-height: 0; display: flex; background: #0d1117; overflow: hidden; }
.content { width: 1905px; padding-left: 345px; padding-right: 344px; color: #c9d1d9; font-family: "Liberation Sans", sans-serif; }
.page-head { height: 48px; display: flex; justify-content: space-between; align-items: flex-start; margin-top: -7px; }
.ptitle { margin: -4px 0 0; font-size: 32px; font-weight: 400; line-height: 44px; }
.pbtns { display: flex; gap: 5px; margin-top: 4px; }
.pbtn { height: 32px; padding: 0 12px; font-size: 12px; line-height: 30px; background: #21262d; border: 1px solid #30363d; border-radius: 6px; white-space: nowrap; }
.pbtn.green { background: #238636; border-color: #2ea043; color: #fff; }
.pbtn.red { color: #f85149; }
.titlebox { height: 32px; margin-top: 7px; border: 1px solid #30363d; border-radius: 6px; padding-left: 12px; font-size: 14px; font-weight: 700; line-height: 30px; }
.form { margin-top: 16px; }
.formtabs { height: 48px; border: 1px solid #21262d; border-bottom: 0; border-radius: 6px 6px 0 0; padding: 8px 0 0 10px; background: #161b22; }
.write { display: block; width: 200px; height: 40px; border: 1px solid #30363d; border-bottom: 0; border-radius: 6px 6px 0 0; background: #0d1117; padding-left: 16px; font-size: 14px; line-height: 36px; }
.mdbar { height: 54px; padding-top: 18px; border-bottom: 1px solid #30363d; }
.mdb { display: block; width: 200px; height: 27px; background: #21262d; border: 1px solid #30363d; border-radius: 6px; padding-left: 11px; font-size: 11px; font-weight: 700; line-height: 25px; }
.editor { height: 499px; margin: 8px 0 0; padding: 21px 8px 0; border: 1px solid #30363d; border-radius: 6px; font: 14px/21px "Liberation Mono", monospace; overflow: hidden; }
.spell { text-decoration: underline wavy #f85149 1px; }
.editlabel { margin-top: 26px; font-size: 14px; font-weight: 700; line-height: 16px; }
.editinput { height: 32px; margin-top: 11px; border: 1px solid #30363d; border-radius: 6px; padding-left: 12px; font-size: 14px; line-height: 30px; color: #484f58; white-space: nowrap; overflow: hidden; }
.savewrap { display: flex; justify-content: flex-end; margin-top: 25px; }
.savebtn { width: 102px; height: 32px; background: #238636; border: 1px solid #2ea043; border-radius: 6px; color: #fff; font-size: 14px; line-height: 30px; text-align: center; }
.pagefoot { height: 1px; margin: 80px -16px 0; background: #21262d; }
.pscroll { flex: 1; background: #2c2c2c; display: flex; flex-direction: column; align-items: center; }
.parrow { width: 0; height: 0; border-left: 4px solid transparent; border-right: 4px solid transparent; margin: 5px 0; }
.parrow.up { border-bottom: 5px solid #e8e8e8; }
.parrow.dn { border-top: 5px solid #e8e8e8; margin-top: 83px; }
.pthumb { width: 11px; height: 671px; margin-top: 152px; background: #6b6b6b; }

/* taskbar */
.taskbar { height: 45px; flex: none; display: flex; align-items: stretch; background: #2a2e32; }
.ti { display: flex; align-items: center; justify-content: center; flex: none; position: relative; }
.w46 { width: 46px; } .w44 { width: 44px; } .w52 { width: 53px; } .w58 { width: 58px; padding-left: 4px; } .w55 { width: 55px; }
.task { width: 51px; background: #44474b; border-top: 3px solid #62666a; margin-right: 2px; }
.task.first { margin-right: 0; }
.i28h { width: 28px; height: 34px; }
.task.act { background: #2f5a72; border-top-color: #2e7fb0; }
.i28 { width: 28px; height: 28px; }
.i24 { width: 24px; height: 24px; }
.i22 { width: 22px; height: 22px; }
.i30 { width: 30px; height: 30px; }
.i26 { width: 26px; height: 30px; }
.i24h { width: 24px; height: 30px; }
.pager { width: 65px; margin: 4px 0; display: grid; grid-template-columns: 32px 32px; grid-template-rows: 18px 18px; gap: 1px; flex: none; }
.pg { background: #3c4044; }
.pg.on { background: #5fa9d6; padding: 3px 3px 0 3px; }
.pgw { display: block; width: 17px; height: 13px; background: #8cc7ea; border: 1px solid #a9d6f0; }
.tray { margin-left: auto; display: flex; align-items: center; padding-right: 6px; }
.tr { width: 33px; display: flex; justify-content: center; }
.i20 { width: 20px; height: 20px; }
.i22s { width: 22px; height: 22px; }
.i18 { width: 18px; height: 18px; }
.i20b { width: 20px; height: 12px; }
.i22w { width: 22px; height: 16px; }
.i20h { width: 18px; height: 20px; }
.trup { width: 25px; display: flex; justify-content: center; }
.uparrow { width: 0; height: 0; border-left: 6px solid transparent; border-right: 6px solid transparent; border-bottom: 6px solid #f0f0f0; }
.clock { width: 88px; display: flex; flex-direction: column; align-items: center; color: #e4e5e6; font-weight: 300; }
.time { font-size: 16.300px; line-height: 17px; }
.cdate { font-size: 13.300px; line-height: 13px; }
.trash { width: 40px; display: flex; justify-content: center; }

/* dolphin */
.dolphin { position: absolute; left: 1300px; top: 224px; width: 518px; height: 682px; background: #2a2e32; border-radius: 4px 4px 0 0; display: flex; flex-direction: column; color: #e4e5e6; font-size: 13px; }
.dol-title { height: 34px; display: flex; justify-content: flex-end; align-items: center; padding-right: 2px; flex: none; }
.winb { width: 14px; height: 14px; color: #eff0f1; margin: 0 7px 0 8px; flex: none; }
.dol-bar { height: 47px; display: flex; align-items: center; justify-content: flex-end; padding: 0 16px 2px 0; flex: none; border-bottom: 1px solid #5a5f63; }
.spliti { width: 16px; height: 14px; margin-right: 7px; }
.splitl { font-size: 13px; margin-right: 19px; }
.dsearch { width: 15px; height: 15px; margin-right: 19px; }
.dmenu { width: 14px; height: 14px; }
.dol-main { flex: 1; min-height: 0; background: #1b1e20; border-right: 1px solid #5a5f63; border-bottom: 1px solid #5a5f63; margin-right: 1px; padding: 21px 0 0 137px; }
.file { width: 162px; display: flex; flex-direction: column; align-items: center; }
.fileicon { width: 110px; height: 140px; flex: none; }
.fname { margin-top: 12px; font-size: 13px; line-height: 18px; white-space: nowrap; }
.dol-status { height: 32px; flex: none; display: flex; align-items: center; padding-left: 149px; font-size: 13px; }
.zl { width: 45px; }
.zslider { position: relative; width: 116px; height: 9px; background: #5a5f63; border-radius: 5px; border: 1px solid #62666a; }
.zfill { display: block; width: 64px; height: 7px; background: #1d3b4f; border-radius: 4px 0 0 4px; }
.zknob { position: absolute; left: 61px; top: -6px; width: 18px; height: 18px; border-radius: 50%; background: #2e3236; border: 1px solid #80858a; }
.zcap { width: 113px; height: 9px; margin-left: 9px; background: #5a5f63; border-radius: 5px; border: 1px solid #62666a; }
.zcapf { display: block; width: 41px; height: 7px; background: #1d3b4f; border-radius: 4px 0 0 4px; }
.zfree { margin-left: 4px; white-space: nowrap; }

/* calc */
.calc { position: absolute; left: 397px; top: 111px; width: 1040px; height: 816px; background: #2a2e32; border-radius: 4px 4px 0 0; display: flex; flex-direction: column; color: #eff0f1; font-size: 13px; }
.c-title { height: 34px; flex: none; background: #31363b; border-bottom: 1px solid #3daee9; border-radius: 4px 4px 0 0; display: flex; align-items: center; padding: 0 2px 0 8px; }
.c-app { width: 17px; height: 22px; }
.c-pin { width: 14px; height: 14px; margin-left: 13px; }
.c-dbl { width: 14px; height: 14px; margin-left: 15px; }
.c-dbl + .c-dbl { margin-left: 16px; }
.c-name { flex: 1; text-align: center; padding-left: 10px; white-space: nowrap; }
.c-menu { height: 32px; flex: none; background: #31363b; display: flex; align-items: center; padding: 0 0 1px 10px; gap: 20.800px; }
.c-menu span { white-space: nowrap; }
.m-close { width: 9px; height: 9px; margin-left: auto; margin-right: 12px; }

.lines i { display: flex; justify-content: center; align-items: center; width: 20px; margin-left: -10px; height: 100%; font-style: normal; }
.lines svg { width: 16px; height: 16px; flex: none; color: #eff0f1; overflow: visible; }
.t1 { height: 39px; flex: none; display: grid; grid-template-rows: 38px; grid-template-columns: 23px 21px 22px 21px 24px 9px 21px 34px 33px 20px 21px 33px 31px 23px 9px 21px 33px 20px 21px 21px 22px 22px 10px 21px 34px 19px 19px 24px 21px 23px 10px 21px 33px 33px 33px 20px 21px 33px 33px 19px 19px 23px 39px 8px; padding-left: 19px; }
.t2 { height: 38px; flex: none; display: flex; align-items: center; padding-left: 5px; }
.t2grid { display: grid; grid-template-rows: 38px; height: 38px; margin-left: 5px; grid-template-columns: 21.500px 32.500px 32px 22.500px 9.500px 19.500px 23.500px 20px 23.500px 10.500px 18.500px 35.500px 36px 16.500px 21.500px 33px 19px 22px 33px 33px 19px 20px 22px 24px 33px 33px 20px 21px 56px 8px; }
.dd { display: block; width: 0; height: 0; border-left: 4px solid transparent; border-right: 4px solid transparent; border-top: 4px solid #eff0f1; margin-top: 3px; }
.dd.dim { border-top-color: #5a5e62; }
.sep { display: block; width: 1px; height: 26px; background: #5f6367; flex: none; }
.lines svg.bsvg { width: 18px; height: 18px; }
.ital { font: italic 24px "Liberation Serif", serif; color: #eff0f1; }
.under { font: 20px/18px "Liberation Sans", sans-serif; border-bottom: 1px solid #eff0f1; padding-bottom: 2px; }
.lines i.ccol { flex-direction: column; justify-content: center; width: 24px; margin-left: -12px; }
.lines svg.cico { width: 20px; height: 15px; }
.bar { display: block; width: 24px; height: 6px; flex: none; }
.barred { background: #c4211c; }
.baryel { background: #ffff00; }
.combo { height: 27px; display: flex; align-items: center; justify-content: space-between; background: #1b1e20; border: 1px solid #5f6367; border-radius: 3px; padding: 0 6px; flex: none; white-space: nowrap; }
.chev { width: 11px; height: 7px; flex: none; }
.fontc { width: 204px; }
.sizec { width: 77px; margin-left: 10px; }
.namec { width: 160px; height: 28px; }

.c-body { flex: 1; min-height: 0; display: flex; }
.c-left { width: 992px; flex: none; display: flex; flex-direction: column; }
.fbar { height: 36px; flex: none; display: flex; align-items: center; padding-left: 5px; }
.fsep { margin-left: 5px; height: 20px; }
.fxi { width: 16px; height: 16px; margin-left: 8px; color: #eff0f1; }
.sig { width: 14px; height: 16px; margin-left: 9px; color: #eff0f1; }
.fdd { margin-left: 7px; }
.eq { margin-left: 10px; width: 12px; font-size: 15px; }
.finput { width: 698px; height: 24px; margin-left: 6px; background: #1b1e20; border: 1px solid #5f6367; border-radius: 1px; padding-left: 5px; line-height: 21px; }
.bigdd { display: block; margin-left: 4px; width: 0; height: 0; border-left: 9px solid transparent; border-right: 9px solid transparent; border-top: 9px solid #fff; }

.sheet { height: 568px; flex: none; display: flex; }
.sheetmain { width: 971px; flex: none; display: flex; flex-direction: column; }
.row { display: grid; grid-template-columns: 33px 219px 314px 126px 232px 47px; flex: none; }
.colhead { height: 20px; }
.ch { text-align: center; font-size: 12px; line-height: 21px; border-right: 1px solid #eff0f1; color: #dcdde0; }
.ch.on { background: #3daee9; font-weight: 700; color: #fff; border-right: 0; }
.ch.last { border-right: 0; }
.corner { border-right: 1px solid #eff0f1; }
.grid { height: 548px; overflow: hidden; background: #fff; }
.grid .row { height: 48px; }
.grid .row:first-child { height: 49px; }
.rh { background: #2a2e32; color: #dcdde0; font-size: 12px; text-align: center; height: 48px; line-height: 50px; }
.rh.on { height: 49px; line-height: 52px; background: #3daee9; color: #fff; font-weight: 700; }
.c { position: relative; height: 48px; background: #fff; border-right: 1px solid #c4c4c4; border-bottom: 1px solid #c4c4c4; color: #000; font: 37.330px/48px "Liberation Sans", sans-serif; font-kerning: none; padding: 0 3px; white-space: nowrap; }
.row:first-child .c { height: 49px; line-height: 50px; }
.c.n { text-align: right; }
.a1 { outline: 2px solid #000; outline-offset: -2px; z-index: 1; border: 0; }
.handle { position: absolute; right: -2px; bottom: -2px; width: 5px; height: 5px; background: #000; }
.vscroll { width: 21px; flex: none; display: flex; flex-direction: column; align-items: center; position: relative; }
.vgrip { display: block; width: 21px; height: 5px; background: #62666a; }
.vthumb { display: block; width: 10px; height: 553px; margin: 5px 0 0; background: #4d5154; border: 1px solid #62666a; border-radius: 5px; }

.hscroll { height: 21px; flex: none; display: flex; align-items: flex-start; padding-left: 5px; }
.htrack { display: block; width: 961px; height: 10px; margin-top: 6px; background: #4d5154; border-radius: 5px; border: 1px solid #5a5e62; flex: none; }
.hthumb { display: block; width: 383px; height: 8px; background: #5a5f63; border-radius: 4px; border: 1px solid #9a9ea2; margin: -1px 0 0 -1px; box-sizing: content-box; }
.hgrip { display: block; width: 4px; height: 21px; background: #62666a; flex: none; }
.sheettabs { height: 23px; flex: none; display: flex; align-items: center; padding-left: 13px; }
.sn { width: 10px; height: 14px; margin-right: 13px; flex: none; }
.addsheet { position: relative; width: 13px; height: 13px; margin-left: 3px; background: linear-gradient(#fff, #fff) center / 13px 3px no-repeat, linear-gradient(#fff, #fff) center / 3px 13px no-repeat; flex: none; }
.stab { margin-left: 11px; width: 99px; height: 23px; background: #1b1e20; border-bottom: 2px solid #fff; font-size: 12px; line-height: 20px; text-align: center; }

.sidebar { position: relative; flex: 1; border-left: 1px solid #5f6367; display: flex; flex-direction: column; align-items: center; padding-top: 11px; padding-left: 7px; }
.sgrip { width: 16px; height: 8px; margin-bottom: 10px; }
.sbtn { width: 30px; height: 31px; margin-bottom: 4.400px; display: flex; align-items: center; justify-content: center; border-radius: 3px; border: 1px solid transparent; color: #eff0f1; flex: none; }
.sbtn svg { width: 16px; height: 16px; }
.sbtn.active { background: #3a3f44; border-color: #62666a; }
.collapse { position: absolute; left: -1px; top: 288px; width: 7px; height: 71px; background: linear-gradient(90deg, transparent 2px, #2a2e32 2px, #2a2e32 5px, transparent 5px) center / 100% 7px no-repeat, #fff; }

.c-status { height: 25px; flex: none; border-top: 1px solid #5f6367; display: flex; align-items: center; font-size: 12px; padding-left: 11px; position: relative; white-space: nowrap; }
.st1 { width: 115px; }
.st2 { width: 118px; }
.st3 { width: 181px; }
.st4 { width: 14px; height: 14px; margin-right: 18px; }
.st5 { width: 12px; height: 12px; }
.st6 { margin-left: 161px; width: 225px; }
.zm { width: 12px; text-align: center; }
.zbar { position: relative; width: 98px; height: 1px; background: #eff0f1; margin: 0 3px 0 5px; }
.ztick { position: absolute; left: 48px; top: -3px; width: 1px; height: 7px; background: #eff0f1; }
.zdot { position: absolute; left: 74px; top: -4px; width: 9px; height: 9px; border-radius: 50%; background: #d8d8d8; }
.zpct { margin-left: 15px; }
.tooltip { position: absolute; left: 424px; top: 817px; width: 322px; height: 26px; background: #2a2e32; border: 1px solid #5f6367; border-radius: 3px; padding-left: 4px; font-size: 13px; line-height: 23px; white-space: nowrap; z-index: 3; }
```
